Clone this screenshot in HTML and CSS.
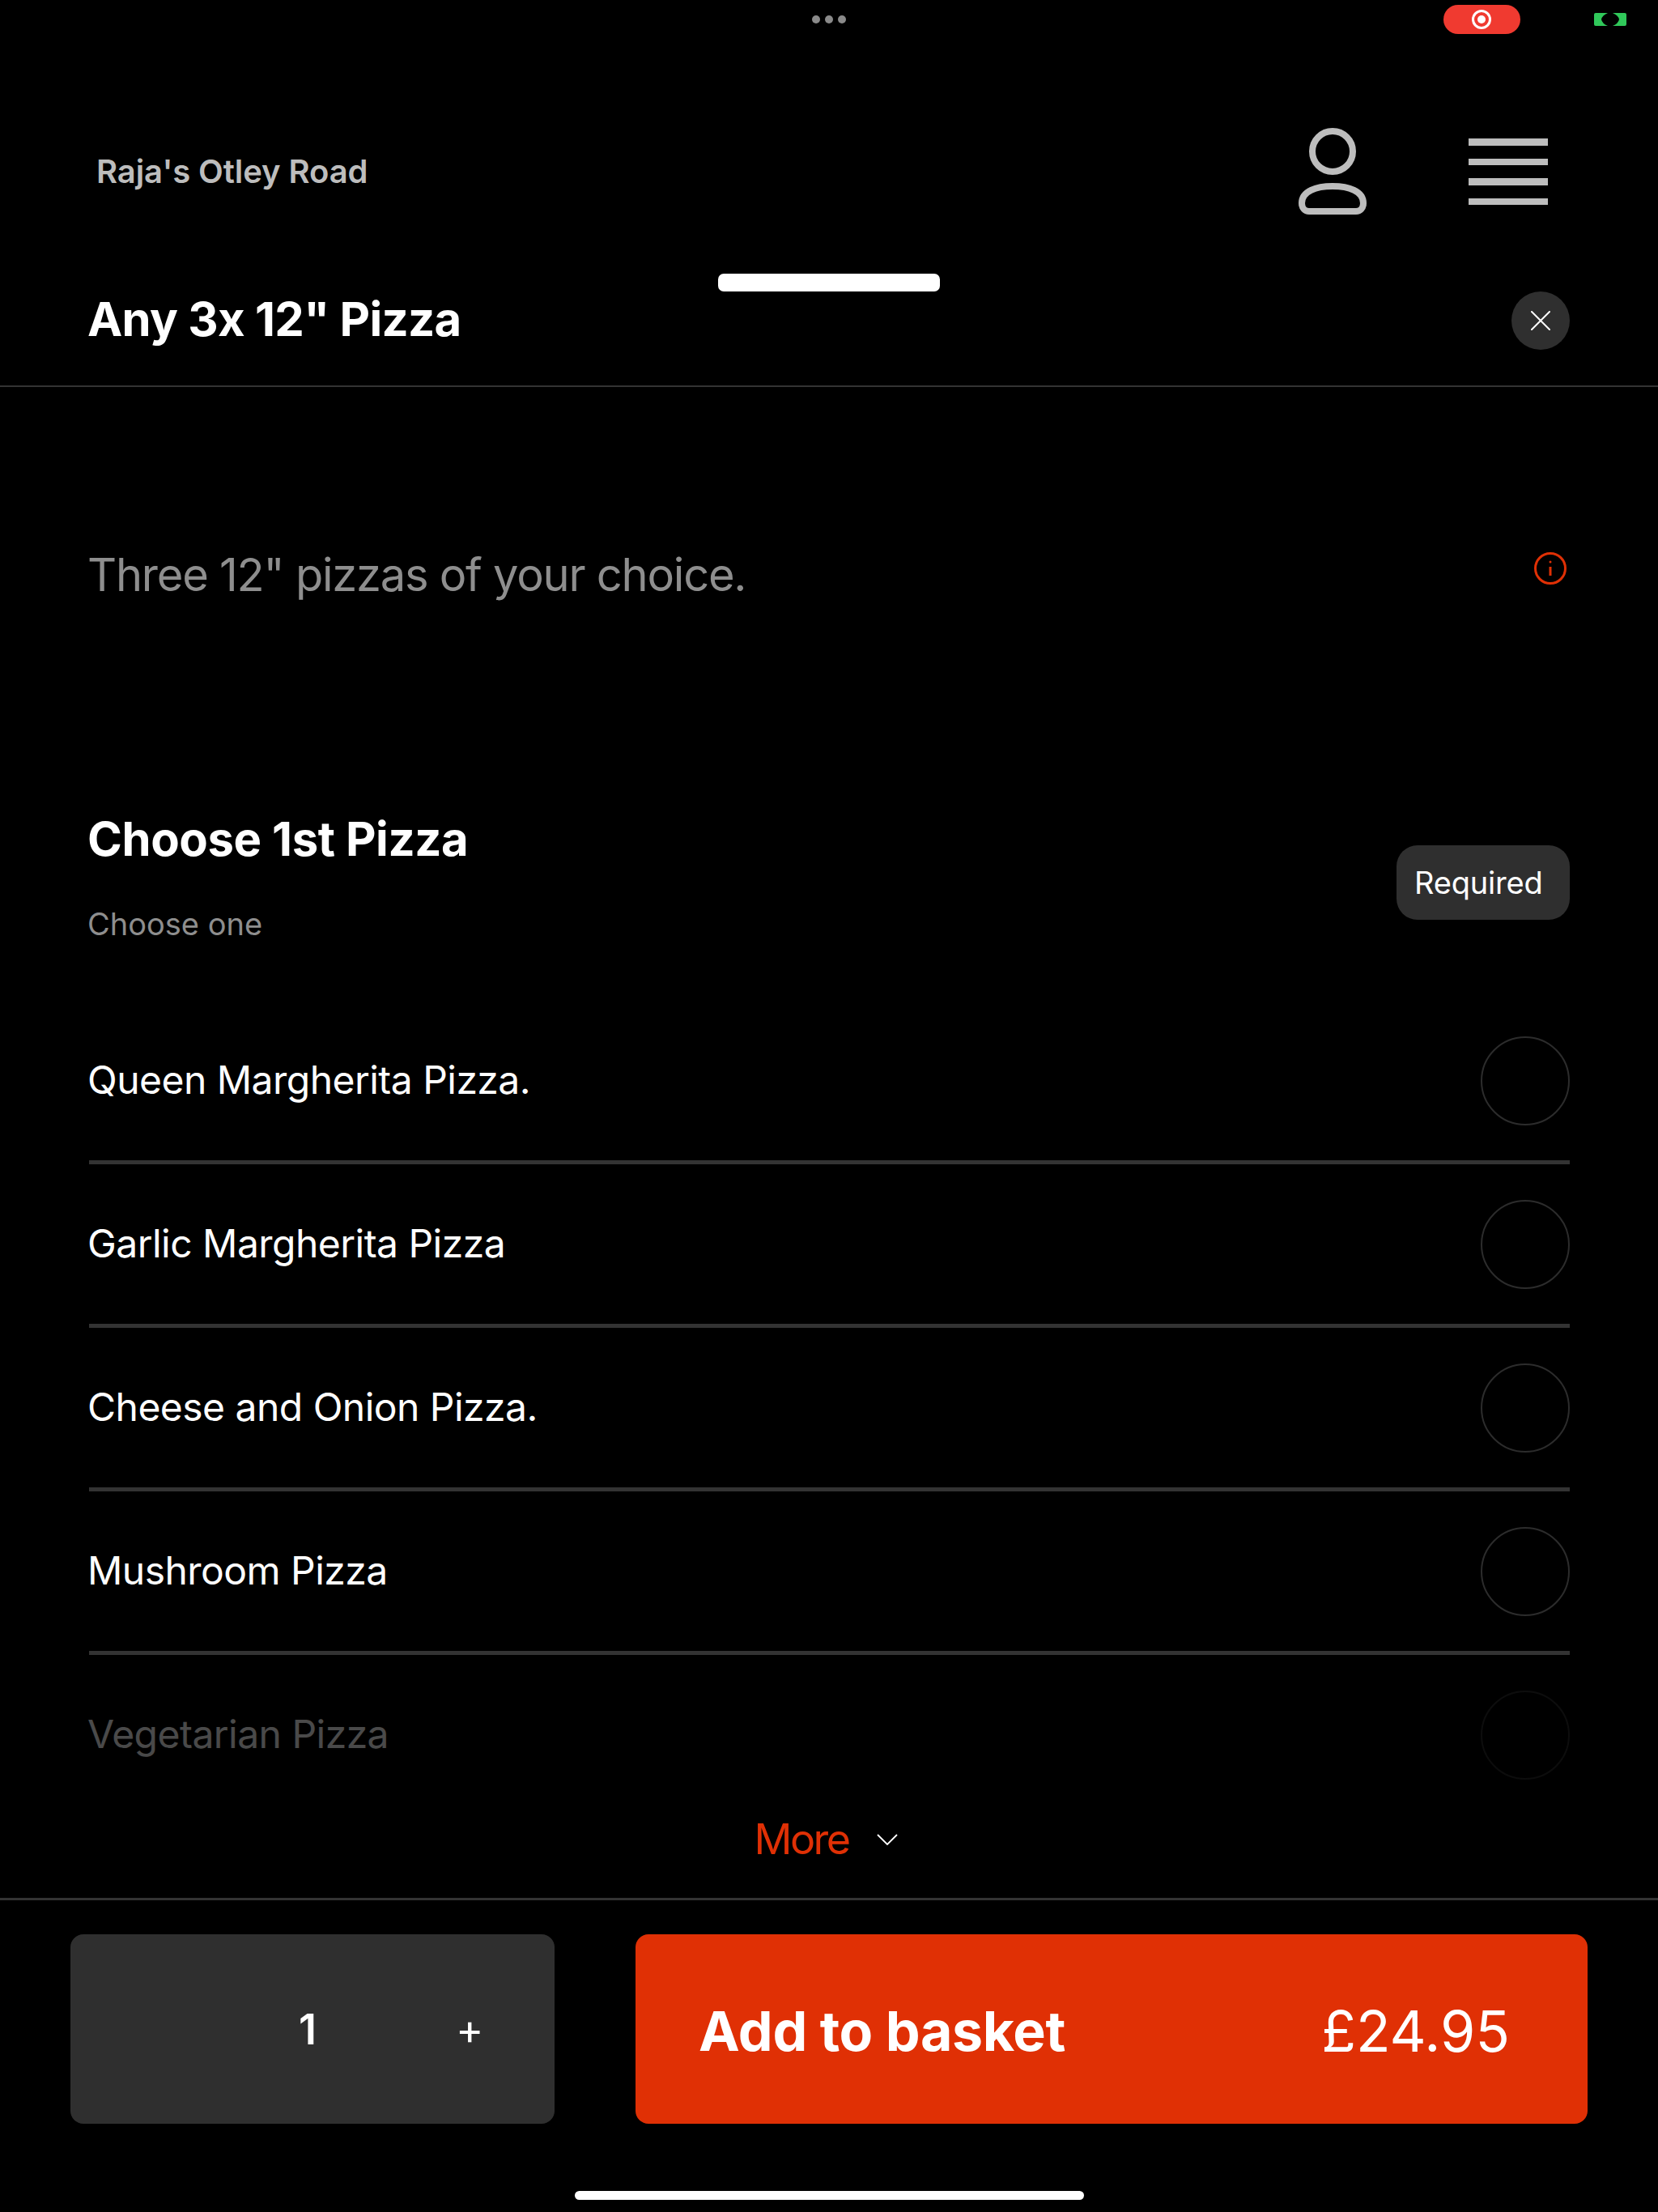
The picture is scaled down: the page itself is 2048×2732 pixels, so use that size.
FILE: index.html
```html
<!DOCTYPE html>
<html lang="en">
<head>
<meta charset="utf-8">
<title>Any 3x 12" Pizza</title>
<link rel="stylesheet" href="styles.css">
</head>
<body>
<div class="app">
  <div class="status">
    <div class="status-side"></div>
    <div class="dots"><i></i><i></i><i></i></div>
    <div class="status-side status-right">
      <div class="rec"><span class="rec-ring"></span></div>
      <svg class="cam" viewBox="0 0 40 16" width="40" height="16"><path fill="#30c85a" d="M2 0H17Q10 3 9 8 10 13 17 16H2Q0 16 0 14V2Q0 0 2 0ZM23 0H38Q40 0 40 2V14Q40 16 38 16H23Q30 13 31 8 30 3 23 0Z"/></svg>
    </div>
  </div>
  <header class="topbar">
    <div class="brand">Raja's Otley Road</div>
    <div class="top-icons">
      <svg class="user" viewBox="0 0 84 107" width="84" height="107" fill="none" stroke="#bdbdbd" stroke-width="8"><circle cx="42" cy="29" r="25"/><path d="M4 93C4 78 22 72 42 72S80 78 80 93C80 99 76 103 71 103H13C8 103 4 99 4 93Z"/></svg>
      <div class="burger"><i></i><i></i><i></i><i></i></div>
    </div>
  </header>
  <main class="sheet">
    <div class="handle"></div>
    <div class="sheet-head">
      <h1 class="title">Any 3x 12" Pizza</h1>
      <button class="close" aria-label="Close"><svg viewBox="0 0 24 24" width="24" height="24" fill="none" stroke="#fff" stroke-width="2" stroke-linecap="round"><path d="M1 1 23 23M23 1 1 23"/></svg></button>
    </div>
    <div class="scroll">
      <div class="desc">
        <p class="desc-text">Three 12" pizzas of your choice.</p>
        <svg class="info" viewBox="0 0 40 40" width="40" height="40" fill="none" stroke="#e03005" stroke-width="3"><circle cx="20" cy="20" r="18.500"/><path d="M20 18V29"/><circle cx="20" cy="12" r="1.500" fill="#e03005" stroke="none"/></svg>
      </div>
      <section class="group">
        <div class="group-head">
          <div>
            <h2 class="group-title">Choose 1st Pizza</h2>
            <p class="group-sub">Choose one</p>
          </div>
          <span class="badge">Required</span>
        </div>
        <ul class="options">
          <li class="option"><span>Queen Margherita Pizza.</span><i class="radio"></i></li>
          <li class="option"><span>Garlic Margherita Pizza</span><i class="radio"></i></li>
          <li class="option"><span>Cheese and Onion Pizza.</span><i class="radio"></i></li>
          <li class="option"><span>Mushroom Pizza</span><i class="radio"></i></li>
          <li class="option"><span>Vegetarian Pizza</span><i class="radio"></i></li>
        </ul>
      </section>
      <div class="more-wrap">
        <div class="more"><span>More</span><svg viewBox="0 0 26 14" width="26" height="14" fill="none" stroke="#fff" stroke-width="1.800"><path d="M1 1 13 13 25 1"/></svg></div>
      </div>
    </div>
    <footer class="footer">
      <div class="qty"><span></span><span class="qty-n">1</span><span class="qty-plus">+</span></div>
      <button class="add"><span class="add-label">Add to basket</span><span class="add-price">£24.95</span></button>
    </footer>
    <div class="home"></div>
  </main>
</div>
</body>
</html>
```

FILE: styles.css
```css
* { box-sizing: border-box; }
html, body { margin: 0; padding: 0; background: #000; }
body { font-family: Inter, "Liberation Sans", sans-serif; color: #fff; font-feature-settings: "calt" 0; }
h1, h2, p, ul { margin: 0; padding: 0; }
ul { list-style: none; }
i { display: block; }

.app { width: 2048px; height: 2732px; overflow: hidden; display: flex; flex-direction: column; }

.status { height: 48px; padding-top: 6px; display: grid; grid-template-columns: 1fr auto 1fr; }
.dots { display: flex; gap: 6px; height: 36px; align-items: center; }
.dots i { width: 10px; height: 10px; border-radius: 50%; background: #8a8a8a; }
.status-right { display: flex; justify-content: flex-end; align-items: center; height: 36px; padding-right: 39px; gap: 91px; }
.rec { width: 95px; height: 36px; border-radius: 18px; background: #f03a30; display: flex; align-items: center; justify-content: center; }
.rec-ring { width: 24px; height: 24px; border-radius: 50%; border: 3px solid #fff; position: relative; display: flex; align-items: center; justify-content: center; margin-right: 2px; }
.rec-ring::after { content: ""; width: 10px; height: 10px; border-radius: 50%; background: #fff; }
.cam { display: block; }

.topbar { height: 290px; padding: 110px 136px 0 119px; display: flex; justify-content: space-between; align-items: flex-start; }
.brand { font-size: 40px; font-weight: 600; color: #bdbdbd; height: 107px; line-height: 107px; letter-spacing: -0.002em; }
.top-icons { display: flex; gap: 126px; align-items: flex-start; }
.user { display: block; }
.burger { width: 98px; padding-top: 13px; display: flex; flex-direction: column; gap: 16px; }
.burger i { height: 8.500px; background: #bdbdbd; }

.sheet { flex: 1; display: flex; flex-direction: column; min-height: 0; }
.handle { width: 274px; height: 22px; border-radius: 7px; background: #fff; margin: 0 auto; flex: none; }
.sheet-head { height: 118px; flex: none; border-bottom: 2px solid #333; padding: 0 109px 0 108px; display: flex; justify-content: space-between; align-items: flex-start; }
.title { font-size: 58px; font-weight: 700; line-height: 68px; letter-spacing: -0.012em; }
.close { width: 72px; height: 72px; border: 0; padding: 0; border-radius: 50%; background: #2f2f2f; display: flex; align-items: center; justify-content: center; }
.close svg { display: block; }

.scroll { flex: 1; min-height: 0; overflow: hidden; position: relative; }
.desc { padding: 198px 113px 0 108px; display: flex; justify-content: space-between; align-items: flex-start; }
.desc-text { font-size: 56px; line-height: 68px; color: #8e8e8e; letter-spacing: -0.022em; }
.info { display: block; margin-top: 6px; }

.group { padding: 0 109px 0 108px; }
.group-head { margin-top: 256px; display: flex; justify-content: space-between; align-items: center; }
.group-title { font-size: 58px; font-weight: 700; line-height: 72px; letter-spacing: -0.007em; }
.group-sub { font-size: 38px; line-height: 50px; color: #8e8e8e; margin-top: 44px; }
.badge { width: 214px; height: 92px; border-radius: 26px; background: #2f2f2f; padding-left: 22px; font-size: 38px; line-height: 92px; color: #fff; margin-top: 13px; letter-spacing: -0.005em; }

.options { margin-top: 70px; padding-left: 2px; }
.option { height: 202px; border-bottom: 5px solid #333; display: flex; justify-content: space-between; align-items: center; font-size: 48px; letter-spacing: -0.011em; }
.option span { margin: -2px 0 0 -2px; }
.radio { width: 110px; height: 110px; border-radius: 50%; border: 2px solid #2c2c2c; }

.more-wrap { position: absolute; left: 0; right: 0; bottom: 0; height: 280px; display: flex; align-items: flex-end; justify-content: center; background: linear-gradient(to bottom, rgba(0,0,0,0) 0, rgba(0,0,0,.7) 20px, rgba(0,0,0,.72) 136px, #000 150px); }
.more { height: 146px; display: flex; align-items: center; gap: 35px; font-size: 52px; color: #e03005; letter-spacing: -0.05em; margin-right: 7px; }
.more svg { display: block; margin-top: 2px; }

.footer { height: 362px; flex: none; border-top: 3px solid #333; padding: 42px 87px 0; display: flex; gap: 100px; align-items: flex-start; }
.qty { width: 598px; height: 234px; border-radius: 16px; background: #2f2f2f; padding-right: 6px; display: grid; grid-template-columns: repeat(3, 1fr); align-items: center; justify-items: center; }
.qty-n { font-size: 52px; font-weight: 600; margin-right: 6px; }
.qty-plus { font-size: 52px; }
.add { width: 1176px; height: 234px; border: 0; border-radius: 16px; background: #e03005; color: #fff; font-family: inherit; padding: 4px 96px 0 78px; display: flex; justify-content: space-between; align-items: center; }
.add-label { font-size: 68px; font-weight: 700; letter-spacing: -0.005em; }
.add-price { font-size: 70px; font-weight: 400; }

.home { width: 629px; height: 11px; border-radius: 6px; background: #fff; margin: 0 auto 15px; flex: none; }
```
